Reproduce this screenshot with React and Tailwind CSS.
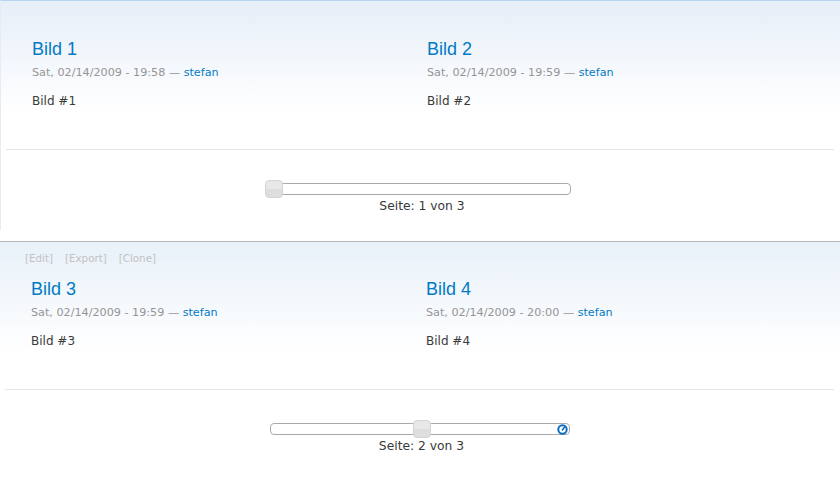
const pages = [
  {
    page: 1,
    showLinks: false,
    items: [
      { title: "Bild 1", date: "Sat, 02/14/2009 - 19:58", body: "Bild #1" },
      { title: "Bild 2", date: "Sat, 02/14/2009 - 19:59", body: "Bild #2" },
    ],
  },
  {
    page: 2,
    showLinks: true,
    items: [
      { title: "Bild 3", date: "Sat, 02/14/2009 - 19:59", body: "Bild #3" },
      { title: "Bild 4", date: "Sat, 02/14/2009 - 20:00", body: "Bild #4" },
    ],
  },
];

const TOTAL = 3;

function Node({ item }) {
  return (
    <div>
      <h2 className="text-[18px] leading-[22px] text-[#027ac6] font-['Liberation_Sans',Arial,sans-serif]">
        {item.title}
      </h2>
      <div className="mt-[5px] text-[11.2px] leading-[16px] text-[#959595]">
        {item.date} — <a className="text-[#027ac6]">stefan</a>
      </div>
      <p className="mt-[12px] text-[12px] leading-[16px] text-[#3a3a3a]">{item.body}</p>
    </div>
  );
}

function Slider({ page }) {
  const pct = ((page - 1) / (TOTAL - 1)) * 100;
  return (
    <div className="flex flex-col items-center">
      <div className="relative h-[12px] w-[300px] rounded-[4px] border border-[#aaaaaa] bg-white">
        <span
          className="absolute top-[-4px] h-[18px] w-[18px] rounded-[4px] border border-[#d3d3d3] bg-[linear-gradient(to_bottom,#e8e8e8_50%,#dedede_50%)]"
          style={{ left: `calc(${pct}% - 7px)` }}
        />
        {page > 1 && (
          <svg
            className="absolute right-[1px] top-[0px]"
            width="11"
            height="11"
            viewBox="0 0 11 11"
          >
            <circle cx="5.5" cy="5.5" r="4.2" fill="none" stroke="#0a6fc2" strokeWidth="2" />
            <path d="M5 6.5 L8 2.5" stroke="#0a6fc2" strokeWidth="1.6" />
          </svg>
        )}
      </div>
      <div className="mt-[3px] ml-[3px] text-[12.3px] leading-[16px] text-[#3a3a3a]">
        Seite: {page} von {TOTAL}
      </div>
    </div>
  );
}

function Block({ data, first }) {
  return (
    <section
      className={
        first
          ? "relative border-t border-l border-t-[#b7d3f1] border-l-[#e2edf8] pt-[37px] pb-[16px] mb-[11px] bg-[linear-gradient(to_bottom,#e6eef8,#ffffff_110px)]"
          : "relative border-t border-[#b8b8b8] pt-[36px] pb-[16px] bg-[linear-gradient(to_bottom,#e8f1f9,#ffffff_110px)]"
      }
    >
      {data.showLinks && (
        <div className="absolute left-[25px] top-[9px] flex gap-[12px] text-[10.3px] leading-[14px] text-[#c2c2c2]">
          <span>[Edit]</span>
          <span>[Export]</span>
          <span>[Clone]</span>
        </div>
      )}
      <div className="grid grid-cols-[395px_1fr] pl-[31px]">
        {data.items.map((item) => (
          <Node key={item.title} item={item} />
        ))}
      </div>
      <div className="mt-[40px] ml-[5px] mr-[6px] h-px bg-[#e6e6e6]" />
      <div className="mt-[33px]">
        <Slider page={data.page} />
      </div>
    </section>
  );
}

export default function App() {
  return (
    <div className="w-[840px] h-[480px] overflow-hidden bg-white font-['DejaVu_Sans',Verdana,sans-serif]">
      {pages.map((p, i) => (
        <Block key={p.page} data={p} first={i === 0} />
      ))}
    </div>
  );
}
